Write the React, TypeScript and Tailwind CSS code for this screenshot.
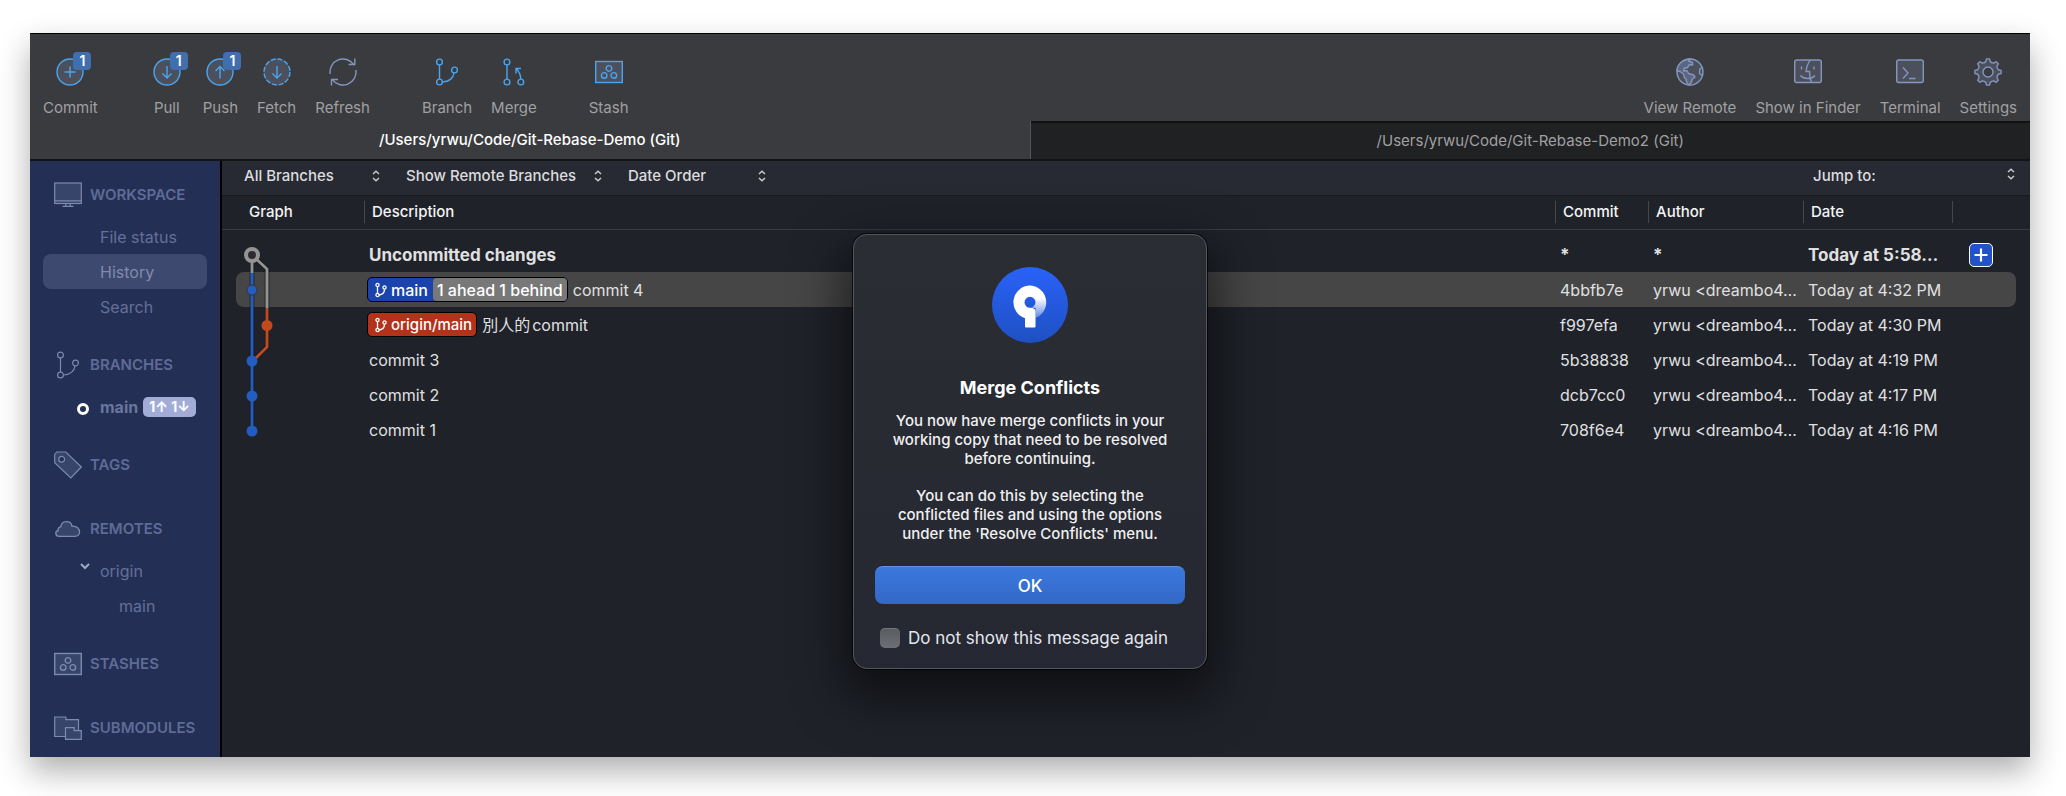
import React from "react";

const iconBase = {
  width: 28,
  height: 28,
  viewBox: "-14 -14 28 28",
  fill: "none",
  stroke: "currentColor",
  strokeWidth: 1.4,
  "aria-hidden": true,
} as const;

const FILL = "#4c505c";
const SIDE_FILL = "#38456b";

function CommitIcon() {
  return (
    <svg {...iconBase}>
      <circle r="13" fill={FILL} />
      <path d="M0-5.5V5.5M-5.5 0H5.5" />
    </svg>
  );
}

function PullIcon({ dashed = false }: { dashed?: boolean }) {
  return (
    <svg {...iconBase}>
      <circle r="13" fill={FILL} strokeDasharray={dashed ? "5.2 1.6" : undefined} />
      <path d="M0-6V6M-4.5 1.5L0 6L4.5 1.5" />
    </svg>
  );
}

function PushIcon() {
  return (
    <svg {...iconBase}>
      <circle r="13" fill={FILL} />
      <path d="M0 6.5V-5.5M-4.5-1L0-5.5L4.5-1" />
    </svg>
  );
}

function RefreshIcon() {
  return (
    <svg {...iconBase}>
      <path d="M-12.850 2A13 13 0 0 1 10.600-7.530M11.800-13.500V-7.500H5.500" />
      <path d="M12.850-2A13 13 0 0 1-10.600 7.530M-11.500 13.500V7.500H-5" />
    </svg>
  );
}

function BranchIcon({ thin = false }: { thin?: boolean }) {
  return (
    <svg {...iconBase} strokeWidth={thin ? 1.2 : 1.4}>
      <circle cx="-7.5" cy="-10" r="2.9" />
      <circle cx="-7.5" cy="10" r="2.9" />
      <circle cx="7.5" cy="-2" r="2.9" />
      <path d="M-7.5-7V7M-4.6 10C2 10 6.500 6 7 1" />
    </svg>
  );
}

function MergeIcon() {
  return (
    <svg {...iconBase}>
      <circle cx="-7" cy="-10" r="2.9" />
      <circle cx="-7" cy="10" r="2.9" />
      <circle cx="6.800" cy="10" r="2.900" />
      <path d="M-7-7V7M6.800 7C6.500 2.500 5-1 2-3.500M7-3.500H2V1.500" />
    </svg>
  );
}

function StashIcon({ fill = FILL }: { fill?: string }) {
  return (
    <svg {...iconBase}>
      <rect x="-13.3" y="-10.5" width="26.600" height="21" fill={fill} />
      <circle cy="-3.600" r="2.800" />
      <circle cx="-4.800" cy="3.400" r="2.800" />
      <circle cx="4.800" cy="3.400" r="2.800" />
    </svg>
  );
}

function GlobeIcon() {
  return (
    <svg {...iconBase} strokeLinejoin="round">
      <circle r="13" fill={FILL} />
      <path
        fill="#5b6680"
        d="M1-13L-1.500-11L2.500-9.500L2.500-7L-.5-7.500L-2.500-4.500L-6-3.500L-6.500-1L-3-1.500L-1.500 1.500L3.500 3L5 5L2 7.500L1.500 10L-1 13C-3 11.500-4 9.500-3.500 7.500L-5.500 6L-6.500 2L-10-.5L-13-1C-13-7-8-13 1-13Z"
      />
      <path d="M12.200-4.500L9.800-3L9.500 1.500L12.500 3.500" />
    </svg>
  );
}

function FinderIcon() {
  return (
    <svg {...iconBase}>
      <rect x="-13.300" y="-12" width="26.600" height="22.500" rx="2" fill={FILL} />
      <path d="M2-12C-.5-8-1.800-4-2-.5H1.500C1.500 3 2 7 3.500 10.500M-6.500-5.500V-2.500M6-5.500V-2.500M-7.500 3.500C-4 7.500 3.500 7.500 7 3.500" />
    </svg>
  );
}

function TerminalIcon() {
  return (
    <svg {...iconBase}>
      <rect x="-13.300" y="-12" width="26.600" height="22.500" rx="2" fill={FILL} />
      <path d="M-7-4.500L-2 1L-7 6.500M-1 6.500H5.500" />
    </svg>
  );
}

function gearPath(teeth: number, outer: number, inner: number) {
  const step = (Math.PI * 2) / teeth;
  const at = (r: number, a: number) =>
    `${(r * Math.sin(a)).toFixed(2)} ${(-r * Math.cos(a)).toFixed(2)}`;
  let d = "";
  for (let i = 0; i < teeth; i++) {
    const a = i * step;
    d += `${i === 0 ? "M" : "L"}${at(outer, a - step * 0.15)}`;
    d += `L${at(outer, a + step * 0.15)}`;
    d += `L${at(inner, a + step * 0.27)}`;
    d += `Q${at(inner - 0.8, a + step * 0.5)} ${at(inner, a + step * 0.73)}`;
  }
  return d + "Z";
}

function GearIcon() {
  return (
    <svg {...iconBase} strokeLinejoin="round">
      <path d={gearPath(8, 13.2, 10.6)} fill={FILL} />
      <circle r="5" fill="#3a3b3e" />
    </svg>
  );
}

function MonitorIcon() {
  return (
    <svg {...iconBase} strokeWidth={1.2}>
      <rect x="-13.300" y="-12" width="26.600" height="20.500" fill={SIDE_FILL} />
      <path d="M-13.300 5.800H13.300M-2.200 8.500V11M2.200 8.500V11M-5.500 11.300H5.500" />
    </svg>
  );
}

function TagIcon() {
  return (
    <svg {...iconBase} strokeWidth={1.2}>
      <path d="M-13.300-10.500L-11.300-13H-2.200L13.300 2L2.800 13L-13.300-2.300Z" fill={SIDE_FILL} />
      <circle cx="-6.300" cy="-5.800" r="2.900" fill="#242f55" />
    </svg>
  );
}

function CloudIcon() {
  return (
    <svg {...iconBase} strokeWidth={1.3}>
      <path
        d="M-9 7.300C-13 7.300-13.200 2-9.800 1.500C-10.500-1.500-8-2.200-7.200-2.200C-6.500-9 3.200-9 4-2.800C8.500-3.300 12 0 11.500 3.500C11 6.500 9 7.300 7 7.300Z"
        fill={SIDE_FILL}
      />
    </svg>
  );
}

function SubmodulesIcon() {
  return (
    <svg {...iconBase} strokeWidth={1.2}>
      <path d="M-13.300-11H-2.200V-8.300H10.500V8.500H-13.300Z" fill={SIDE_FILL} />
      <path d="M-2.500-.3H6.200V2.700H13.300V11.300H-2.500Z" fill={SIDE_FILL} />
    </svg>
  );
}

function UpDown({ className = "" }: { className?: string }) {
  return (
    <svg
      className={className}
      width="8"
      height="12"
      viewBox="0 0 8 12"
      fill="none"
      stroke="currentColor"
      strokeWidth="1.500"
      aria-hidden
    >
      <path d="M1 4L4 1.200L7 4M1 8L4 10.800L7 8" />
    </svg>
  );
}

function ChipBranchIcon() {
  return (
    <svg width="12" height="16" viewBox="0 0 12 16" fill="none" stroke="white" strokeWidth="1.300" aria-hidden>
      <circle cx="2.500" cy="3" r="1.600" />
      <circle cx="2.500" cy="13" r="1.600" />
      <circle cx="9.500" cy="5.500" r="1.600" />
      <path d="M2.500 4.600V11.400M4 13C7.500 12.500 9.500 10.500 9.500 7.200" />
    </svg>
  );
}

function SourcetreeLogo() {
  return (
    <svg width="76" height="76" viewBox="-38 -38 76 76" aria-hidden>
      <defs>
        <linearGradient id="disc" x1="0" y1="0" x2="0" y2="1">
          <stop offset="0" stopColor="#2962f8" />
          <stop offset="1" stopColor="#1f50c2" />
        </linearGradient>
        <linearGradient id="fade" gradientUnits="userSpaceOnUse" x1="0" y1="-7" x2="0" y2="14">
          <stop offset="0" stopColor="#fff" />
          <stop offset="1" stopColor="#fff" stopOpacity="0.25" />
        </linearGradient>
      </defs>
      <circle r="38" fill="url(#disc)" />
      <path d="M-.5-19.400A16.700 16.700 0 0 1 5.500 12.900V2.800L0 2.800A5.500 5.500 0 0 0 0-8.200H-.5Z" fill="url(#fade)" />
      <path
        d="M0-19.400A16.700 16.700 0 0 0-5 13.200V21.500Q-5 22.500-4 22.500H4.500Q5.500 22.500 5.500 21.500V6.500Q5.500 2.800 0 2.800A5.500 5.500 0 0 1 0-8.200Z"
        fill="#fff"
      />
    </svg>
  );
}

function ToolButton({
  label,
  tone = "blue",
  badge,
  children,
}: {
  label: string;
  tone?: "blue" | "slate";
  badge?: string;
  children: React.ReactNode;
}) {
  return (
    <button type="button" className="flex min-w-[34px] flex-col items-center gap-3 text-[#a0a0a3]">
      <span className={tone === "blue" ? "relative text-[#4aa5f0]" : "relative text-[#8496c0]"}>
        {children}
        {badge && (
          <span className="absolute -top-[6px] left-[17px] flex size-[18px] items-center justify-center rounded-[4px] bg-[#416fae] text-[14px] leading-[18px] font-semibold text-white">
            {badge}
          </span>
        )}
      </span>
      <span className="text-[15px] leading-5 whitespace-nowrap">{label}</span>
    </button>
  );
}

function Filter({ label, className }: { label: string; className: string }) {
  return (
    <div className={`relative flex items-center ${className}`}>
      <select
        aria-label={label}
        className="w-full appearance-none bg-transparent text-[15px] leading-5 font-medium text-[#dcdcde] outline-none"
      >
        <option>{label}</option>
      </select>
      <UpDown className="pointer-events-none absolute right-0 text-[#c9c9cc]" />
    </div>
  );
}

function SideHeading({ icon, children }: { icon: React.ReactNode; children: string }) {
  return (
    <h2 className="flex h-9 items-center gap-2 pl-6 text-[15px] leading-5 font-semibold text-[#5f6b95]">
      <span className="text-[#7d89b0]">{icon}</span>
      {children}
    </h2>
  );
}

function SideItem({ active = false, deep = false, children }: { active?: boolean; deep?: boolean; children: React.ReactNode }) {
  return (
    <a
      href="#"
      className={`mx-[13px] flex h-[35px] items-center rounded-lg text-[16px] leading-5 ${deep ? "pl-[76px]" : "pl-[57px]"} ${
        active ? "bg-[#3d496e] text-[#808bb0]" : "text-[#656f98]"
      }`}
    >
      {children}
    </a>
  );
}

function Sidebar() {
  return (
    <nav className="flex w-[192px] shrink-0 flex-col gap-7 overflow-hidden border-r-2 border-black bg-[#242f55] pt-4">
      <section className="-mb-[5px]">
        <SideHeading icon={<MonitorIcon />}>WORKSPACE</SideHeading>
        <div className="pt-[6px]">
          <SideItem>File status</SideItem>
          <SideItem active>History</SideItem>
          <SideItem>Search</SideItem>
        </div>
      </section>
      <section className="-mb-[5px]">
        <SideHeading icon={<BranchIcon thin />}>BRANCHES</SideHeading>
        <a href="#" className="mt-[6px] flex h-[35px] items-center pl-[47px] text-[16px] leading-5 font-bold text-[#6a759d]">
          <span className="mt-1 mr-[11px] size-3 rounded-full border-[3px] border-white" />
          main
          <span className="ml-[5px] flex h-5 items-center rounded-[5px] bg-[#a2acd6] px-[6px] text-[14px] leading-5 font-bold whitespace-nowrap text-white">
            1↑ 1↓
          </span>
        </a>
      </section>
      <SideHeading icon={<TagIcon />}>TAGS</SideHeading>
      <section className="-mb-[5px]">
        <SideHeading icon={<CloudIcon />}>REMOTES</SideHeading>
        <div className="pt-[6px]">
          <a href="#" className="flex h-[35px] items-center pl-[50px] text-[16px] leading-5 text-[#656f98]">
            <svg className="mr-[10px] mb-2" width="10" height="7" viewBox="0 0 10 7" fill="none" stroke="#a0a9c8" strokeWidth="2" aria-hidden>
              <path d="M1 1L5 5L9 1" />
            </svg>
            origin
          </a>
          <SideItem deep>main</SideItem>
        </div>
      </section>
      <SideHeading icon={<StashIcon fill={SIDE_FILL} />}>STASHES</SideHeading>
      <SideHeading icon={<SubmodulesIcon />}>SUBMODULES</SideHeading>
    </nav>
  );
}

type Row = { desc: React.ReactNode; commit: string; date: string; selected?: boolean };

const AUTHOR = "yrwu <dreambo4…";

const chip = "inline-flex h-[25px] items-center rounded-[5px] border border-black leading-5 font-medium text-white";

const rows: Row[] = [
  {
    desc: (
      <span className="flex items-center gap-[5px]">
        <span className={`${chip} bg-[#1b43ac] text-[16px]`}>
          <span className="flex items-center gap-1 pr-[5px] pl-[7px]">
            <ChipBranchIcon />
            main
          </span>
          <span className="flex h-full items-center rounded-[4px] bg-[#787878] px-1">1 ahead 1 behind</span>
        </span>
        commit 4
      </span>
    ),
    commit: "4bbfb7e",
    date: "Today at 4:32 PM",
    selected: true,
  },
  {
    desc: (
      <span className="flex items-center gap-[5px]">
        <span className={`${chip} gap-1 bg-[#b3331a] pr-1 pl-[7px] text-[15px]`}>
          <ChipBranchIcon />
          origin/main
        </span>
        <span className="flex gap-[2px]">
          <span>別人的</span>
          <span>commit</span>
        </span>
      </span>
    ),
    commit: "f997efa",
    date: "Today at 4:30 PM",
  },
  { desc: "commit 3", commit: "5b38838", date: "Today at 4:19 PM" },
  { desc: "commit 2", commit: "dcb7cc0", date: "Today at 4:17 PM" },
  { desc: "commit 1", commit: "708f6e4", date: "Today at 4:16 PM" },
];

function Graph() {
  return (
    <svg className="pointer-events-none absolute top-[42px] left-[14px]" width="50" height="210" viewBox="0 0 50 210" fill="none" aria-hidden>
      <g stroke="#191b20" strokeOpacity="0.6" strokeWidth="5">
        <path d="M16 17V193" />
        <path d="M16 17L31 31V109L16 124" />
      </g>
      <g strokeWidth="2.800">
        <path d="M16 17V35M16 17L31 31V70" stroke="#949494" />
        <path d="M31 70V109L16 124" stroke="#c24a1f" />
        <path d="M16 35V193" stroke="#245dc1" />
      </g>
      <circle cx="16" cy="17" r="6" fill="#2b2c2f" stroke="#949494" strokeWidth="4" />
      <circle cx="16" cy="52" r="5" fill="#245dc1" stroke="#33353b" strokeWidth="1" />
      <circle cx="31" cy="87.500" r="5.500" fill="#c24a1f" />
      <circle cx="16" cy="123" r="5.500" fill="#245dc1" />
      <circle cx="16" cy="158" r="5.500" fill="#245dc1" />
      <circle cx="16" cy="193" r="5.500" fill="#245dc1" />
    </svg>
  );
}

const th = "border-b border-[#3a3c43] p-0 text-left align-middle text-[15px] leading-5 font-medium text-[#f4f4f5]";

function HeadCell({ children }: { children?: string }) {
  return (
    <th className={th}>
      <span className="-mt-px flex h-[22px] items-center border-l border-[#45474f] pl-[7px]">{children}</span>
    </th>
  );
}

function History() {
  return (
    <div className="relative">
      <table className="w-full table-fixed border-separate border-spacing-0 text-[16px] leading-5 text-[#e0e0e1]">
        <colgroup>
          <col className="w-[14px]" />
          <col className="w-[128px]" />
          <col />
          <col className="w-[93px]" />
          <col className="w-[155px]" />
          <col className="w-[149px]" />
          <col className="w-[64px]" />
          <col className="w-[14px]" />
        </colgroup>
        <thead>
          <tr className="h-[34px]">
            <th className={th} />
            <th className={th}>
              <span className="-mt-px block pl-[13px]">Graph</span>
            </th>
            <HeadCell>Description</HeadCell>
            <HeadCell>Commit</HeadCell>
            <HeadCell>Author</HeadCell>
            <HeadCell>Date</HeadCell>
            <HeadCell />
            <th className={th} />
          </tr>
        </thead>
        <tbody>
          <tr className="h-[7px]" aria-hidden>
            <td colSpan={8} className="p-0" />
          </tr>
          <tr className="h-[35px] text-[17px] font-bold">
            <td />
            <td />
            <td className="p-0 pl-[5px]">Uncommitted changes</td>
            <td className="p-0 pl-[5px]">*</td>
            <td className="p-0 pl-[5px]">*</td>
            <td className="p-0 pl-[5px] whitespace-nowrap">Today at 5:58…</td>
            <td className="p-0 pl-[17px]">
              <button
                type="button"
                aria-label="Commit changes"
                className="flex size-6 items-center justify-center rounded-[5px] border border-white bg-[#2152c8]"
              >
                <svg width="14" height="14" viewBox="0 0 14 14" stroke="white" strokeWidth="2.200" aria-hidden>
                  <path d="M7 0.500V13.500M0.500 7H13.500" />
                </svg>
              </button>
            </td>
            <td />
          </tr>
          {rows.map((r) => {
            const bg = r.selected ? "bg-[#464646]" : "";
            return (
              <tr key={r.commit} className="h-[35px]">
                <td className="p-0" />
                <td className={`p-0 ${bg} rounded-l-lg`} />
                <td className={`p-0 ${bg} ${typeof r.desc === "string" ? "pl-[5px]" : "pl-[3px]"}`}>{r.desc}</td>
                <td className={`p-0 pl-[5px] ${bg}`}>{r.commit}</td>
                <td className={`p-0 pl-[5px] whitespace-nowrap ${bg}`}>{AUTHOR}</td>
                <td className={`p-0 pl-[5px] whitespace-nowrap ${bg}`}>{r.date}</td>
                <td className={`p-0 ${bg} rounded-r-lg`} />
                <td className="p-0" />
              </tr>
            );
          })}
        </tbody>
      </table>
      <Graph />
    </div>
  );
}

function Dialog() {
  return (
    <div
      role="dialog"
      aria-labelledby="dialog-title"
      className="absolute top-[201px] left-1/2 flex w-[354px] -translate-x-1/2 flex-col items-center rounded-[14px] border border-[#54565b] bg-linear-to-b from-[#2a2d32] to-[#252832] px-[21px] pt-8 pb-[18px] shadow-[0_0_0_1px_rgba(0,0,0,0.7),0_20px_50px_10px_rgba(0,0,0,0.55)]"
    >
      <SourcetreeLogo />
      <h1 id="dialog-title" className="mt-[34px] text-[18px] leading-[22px] font-bold text-white">
        Merge Conflicts
      </h1>
      <p className="mt-3 text-center text-[15px] leading-[19px] font-medium text-[#f0f0f1]">
        You now have merge conflicts in your
        <br />
        working copy that need to be resolved
        <br />
        before continuing.
      </p>
      <p className="mt-[18px] text-center text-[15px] leading-[19px] font-medium text-[#f0f0f1]">
        You can do this by selecting the
        <br />
        conflicted files and using the options
        <br />
        under the 'Resolve Conflicts' menu.
      </p>
      <button
        type="button"
        className="mt-[23px] h-[38px] w-full rounded-lg border-t border-[#5f92e6] bg-linear-to-b from-[#3b79de] to-[#3368c5] text-[17px] leading-6 font-medium text-white"
      >
        OK
      </button>
      <label className="mt-[22px] flex items-center gap-2 self-start pl-[5px] text-[17px] leading-6 whitespace-nowrap text-[#e4e6ee]">
        <input
          type="checkbox"
          className="size-5 appearance-none rounded-[5px] border-t border-[#74777d] bg-linear-to-b from-[#5a5c61] to-[#6c6f75]"
        />
        Do not show this message again
      </label>
    </div>
  );
}

export default function App() {
  return (
    <main className="flex h-screen flex-col bg-white pt-[33px] pr-9 pb-[39px] pl-[30px] font-['Inter','Noto_Sans_CJK_TC',sans-serif] antialiased">
      <div className="relative flex min-h-0 flex-1 flex-col bg-[#1f2229] shadow-[0_14px_30px_rgba(0,0,0,0.32)]">
        <header className="flex h-[88px] justify-between border-t border-black bg-[#3a3b3e] px-[13px] pt-6">
          <div className="flex items-start gap-[52px]">
            <ToolButton label="Commit" badge="1">
              <CommitIcon />
            </ToolButton>
            <div className="flex gap-[19px]">
              <ToolButton label="Pull" badge="1">
                <PullIcon />
              </ToolButton>
              <ToolButton label="Push" badge="1">
                <PushIcon />
              </ToolButton>
              <ToolButton label="Fetch">
                <PullIcon dashed />
              </ToolButton>
              <ToolButton label="Refresh" tone="slate">
                <RefreshIcon />
              </ToolButton>
            </div>
            <div className="flex gap-[19px]">
              <ToolButton label="Branch">
                <BranchIcon />
              </ToolButton>
              <ToolButton label="Merge">
                <MergeIcon />
              </ToolButton>
            </div>
            <ToolButton label="Stash">
              <StashIcon />
            </ToolButton>
          </div>
          <div className="flex items-start gap-[19px]">
            <ToolButton label="View Remote" tone="slate">
              <GlobeIcon />
            </ToolButton>
            <ToolButton label="Show in Finder" tone="slate">
              <FinderIcon />
            </ToolButton>
            <ToolButton label="Terminal" tone="slate">
              <TerminalIcon />
            </ToolButton>
            <ToolButton label="Settings" tone="slate">
              <GearIcon />
            </ToolButton>
          </div>
        </header>

        <div role="tablist" className="flex h-10 border-b-2 border-[#131417] text-[15px] leading-5">
          <button type="button" role="tab" aria-selected="true" className="flex-1 border-r border-[#55565a] bg-[#3a3b3e] font-medium text-white">
            /Users/yrwu/Code/Git-Rebase-Demo (Git)
          </button>
          <button type="button" role="tab" aria-selected="false" className="flex-1 border-t-2 border-[#101112] bg-[#202122] text-[#a0a0a2]">
            /Users/yrwu/Code/Git-Rebase-Demo2 (Git)
          </button>
        </div>

        <div className="flex min-h-0 flex-1">
          <Sidebar />
          <div className="min-w-0 flex-1">
            <div className="flex h-[35px] items-center justify-between border-b border-[#191a1e] bg-[#282a33] pr-[15px] pb-1 pl-[22px]">
              <div className="flex gap-[26px]">
                <Filter label="All Branches" className="w-[136px]" />
                <Filter label="Show Remote Branches" className="w-[196px]" />
                <Filter label="Date Order" className="w-[138px]" />
              </div>
              <div className="flex w-[202px] items-center text-[15px] leading-5 font-medium text-[#dcdcde]">
                <label htmlFor="jump">Jump to:</label>
                <div className="relative flex flex-1 items-center">
                  <select id="jump" className="w-full appearance-none bg-transparent outline-none" />
                  <UpDown className="pointer-events-none absolute right-0 bottom-[6px] text-[#c9c9cc]" />
                </div>
              </div>
            </div>
            <History />
          </div>
        </div>
        <Dialog />
      </div>
    </main>
  );
}
